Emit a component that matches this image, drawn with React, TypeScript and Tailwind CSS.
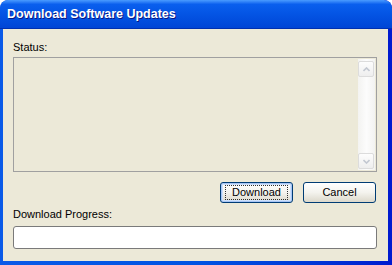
import React from 'react';

// Windows XP style "Download Software Updates" dialog.
function Chevron({ up }: { up?: boolean }) {
  return (
    <svg width="7" height="5" viewBox="0 0 7 5" className="block">
      <polyline
        points={up ? '0.5,4 3.5,1 6.5,4' : '0.5,1 3.5,4 6.5,1'}
        fill="none"
        stroke="#c3c8d1"
        strokeWidth="1.6"
      />
    </svg>
  );
}

function ScrollButton({ up }: { up?: boolean }) {
  return (
    <div className="w-[16px] h-[16px] rounded-[2px] border border-[#dcdcdc] bg-gradient-to-b from-[#fdfdfd] to-[#eeeeee] flex items-center justify-center">
      <Chevron up={up} />
    </div>
  );
}

function XpButton({ label, focused }: { label: string; focused?: boolean }) {
  return (
    <button
      className={
        'w-[73px] h-[21px] rounded-[3px] border border-[#003c74] bg-gradient-to-b from-[#ffffff] via-[#f4f3ee] to-[#dcd8cb] text-[11px] text-black flex items-center justify-center ' +
        (focused ? 'shadow-[inset_0_0_0_1px_#a8c6f5,inset_0_0_0_2px_#cfe1fb]' : '')
      }
    >
      {focused ? (
        <span className="border border-dotted border-[#303030] px-[6px] leading-[13px]">{label}</span>
      ) : (
        <span className="leading-[13px]">{label}</span>
      )}
    </button>
  );
}

export default function App() {
  return (
    <div
      className="w-[392px] h-[265px] flex flex-col rounded-t-[8px] bg-gradient-to-r from-[#0a5ae8] via-[#0054e3] to-[#0019cf] overflow-hidden"
      style={{ fontFamily: '"Liberation Sans", Arial, sans-serif' }}
    >
      <div className="h-[29px] shrink-0 flex items-center pl-[7px] pt-[1px] bg-gradient-to-b from-[#4a9bff] via-[#0a5fee] via-[15%] to-[#0045d6] border-b border-[#0030b0] rounded-t-[8px]">
        <span className="text-white font-bold text-[12.5px] [text-shadow:1px_1px_0_#0a1883]">
          Download Software Updates
        </span>
      </div>

      <div className="w-[385px] h-[232px] ml-[3px] bg-[#ece9d8] flex flex-col items-start pl-[10px]">
        <div className="mt-[12px] text-[11px] leading-[13px] text-black">Status:</div>

        <div className="mt-[3px] w-[364px] h-[115px] border border-[#a0a0a0] bg-[#ece9d8] flex justify-end p-[1px]">
          <div className="w-[17px] h-full flex flex-col justify-between bg-gradient-to-r from-[#f3f3f1] via-[#fcfcfc] to-[#f3f3f1] pt-[2px] pb-[1px]">
            <ScrollButton up />
            <ScrollButton />
          </div>
        </div>

        <div className="mt-[10px] w-[363px] flex justify-end gap-[10px]">
          <XpButton label="Download" focused />
          <XpButton label="Cancel" />
        </div>

        <div className="mt-[5px] text-[11px] leading-[13px] text-black">Download Progress:</div>

        <div className="mt-[5px] w-[364px] h-[23px] rounded-[3px] border border-[#7a7a7a] bg-white" />
      </div>
    </div>
  );
}
